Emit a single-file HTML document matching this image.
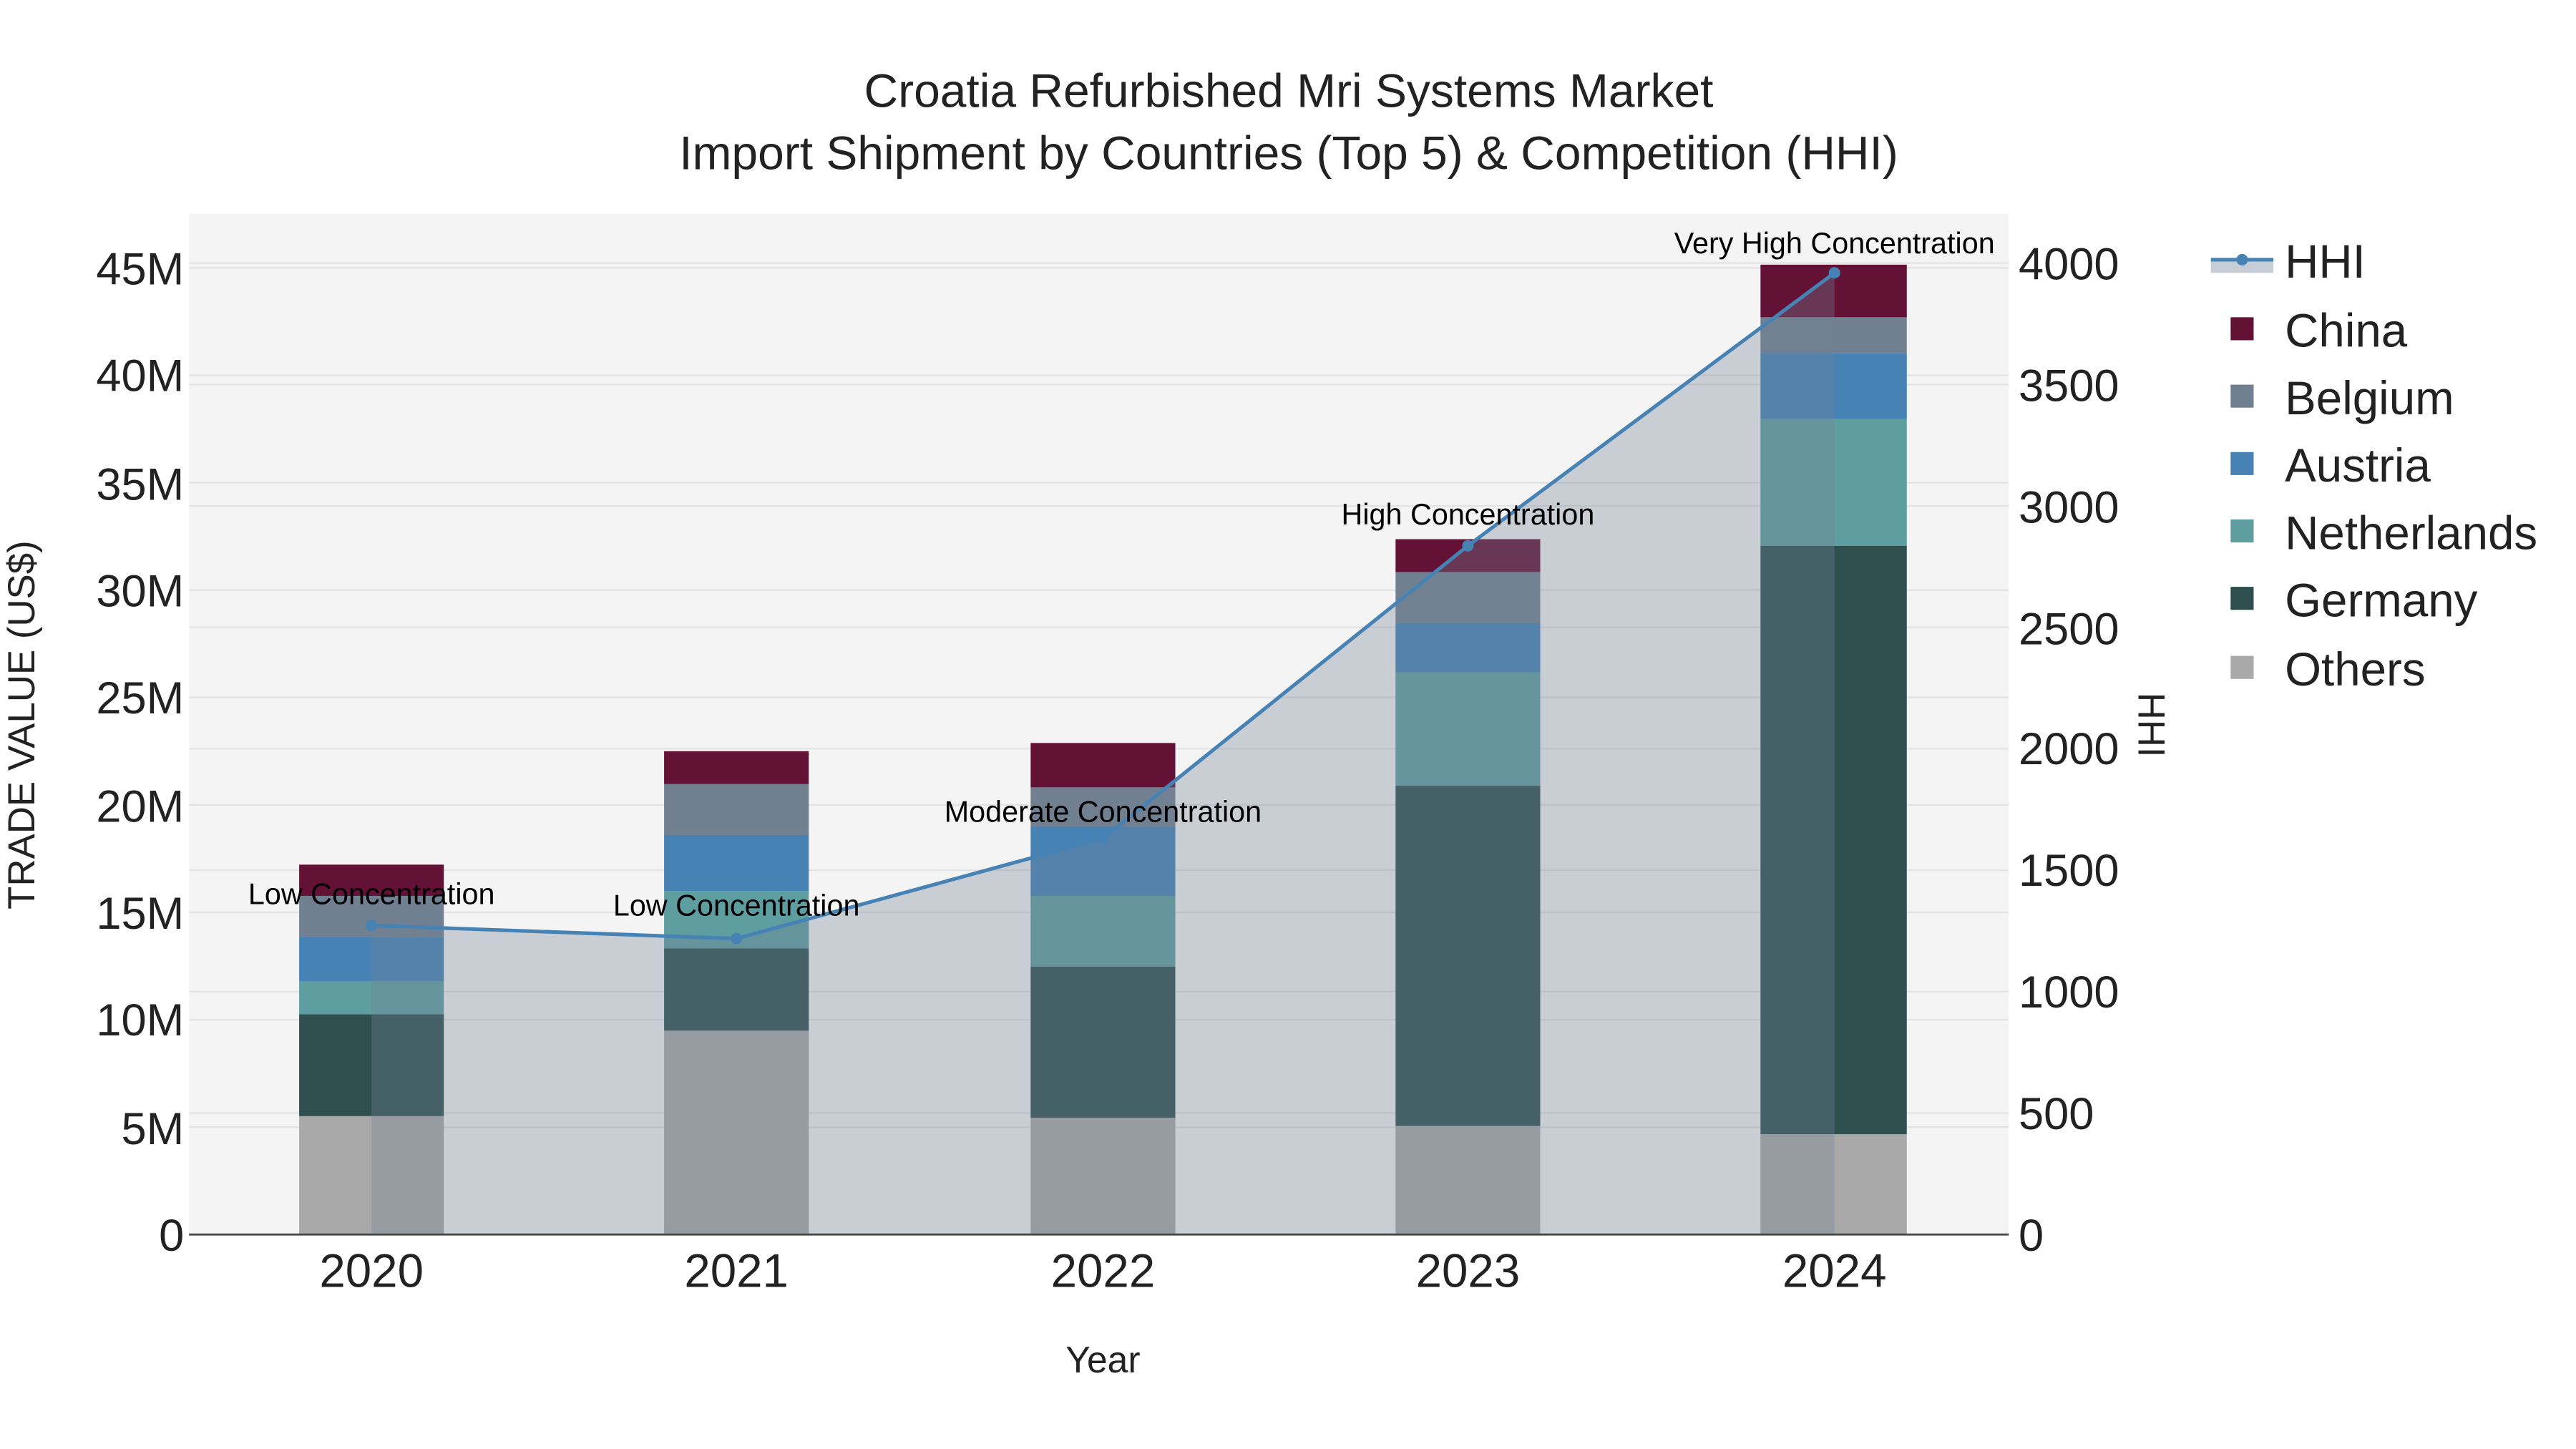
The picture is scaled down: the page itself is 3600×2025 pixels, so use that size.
<!DOCTYPE html>
<html><head><meta charset="utf-8"><style>html,body{margin:0;padding:0;background:#fff}svg{display:block}</style></head>
<body>
<svg width="3600" height="2025" viewBox="0 0 1567 881.5" preserveAspectRatio="xMinYMin meet" xmlns="http://www.w3.org/2000/svg" font-family="'Liberation Sans', sans-serif">
<rect width="1567" height="881.5" fill="#fff"/>
<rect x="115" y="130" width="1107" height="621" fill="#f4f4f4"/>
<g stroke="#e3e3e3" stroke-width="1">
<line x1="115" x2="1222" y1="685.7" y2="685.7"/><line x1="115" x2="1222" y1="620.3" y2="620.3"/>
<line x1="115" x2="1222" y1="555" y2="555"/><line x1="115" x2="1222" y1="489.7" y2="489.7"/>
<line x1="115" x2="1222" y1="424.3" y2="424.3"/><line x1="115" x2="1222" y1="359" y2="359"/>
<line x1="115" x2="1222" y1="293.7" y2="293.7"/><line x1="115" x2="1222" y1="228.3" y2="228.3"/>
<line x1="115" x2="1222" y1="163" y2="163"/>
<line x1="115" x2="1222" y1="677.1" y2="677.1"/><line x1="115" x2="1222" y1="603.3" y2="603.3"/>
<line x1="115" x2="1222" y1="529.4" y2="529.4"/><line x1="115" x2="1222" y1="455.5" y2="455.5"/>
<line x1="115" x2="1222" y1="381.6" y2="381.6"/><line x1="115" x2="1222" y1="307.8" y2="307.8"/>
<line x1="115" x2="1222" y1="233.9" y2="233.9"/><line x1="115" x2="1222" y1="160" y2="160"/>
</g>
<g>
<rect x="182" y="679" width="88" height="72" fill="#a9a9a9"/><rect x="182" y="617" width="88" height="62" fill="#2f4f4f"/><rect x="182" y="597" width="88" height="20" fill="#5f9ea0"/><rect x="182" y="570" width="88" height="27" fill="#4682b4"/><rect x="182" y="545" width="88" height="25" fill="#708090"/><rect x="182" y="526" width="88" height="19" fill="#631236"/>
<rect x="404" y="627" width="88" height="124" fill="#a9a9a9"/><rect x="404" y="577" width="88" height="50" fill="#2f4f4f"/><rect x="404" y="542" width="88" height="35" fill="#5f9ea0"/><rect x="404" y="508" width="88" height="34" fill="#4682b4"/><rect x="404" y="477" width="88" height="31" fill="#708090"/><rect x="404" y="457" width="88" height="20" fill="#631236"/>
<rect x="627" y="680" width="88" height="71" fill="#a9a9a9"/><rect x="627" y="588" width="88" height="92" fill="#2f4f4f"/><rect x="627" y="545" width="88" height="43" fill="#5f9ea0"/><rect x="627" y="503" width="88" height="42" fill="#4682b4"/><rect x="627" y="479" width="88" height="24" fill="#708090"/><rect x="627" y="452" width="88" height="27" fill="#631236"/>
<rect x="849" y="685" width="88" height="66" fill="#a9a9a9"/><rect x="849" y="478" width="88" height="207" fill="#2f4f4f"/><rect x="849" y="409" width="88" height="69" fill="#5f9ea0"/><rect x="849" y="379" width="88" height="30" fill="#4682b4"/><rect x="849" y="348" width="88" height="31" fill="#708090"/><rect x="849" y="328" width="88" height="20" fill="#631236"/>
<rect x="1071" y="690" width="89" height="61" fill="#a9a9a9"/><rect x="1071" y="332" width="89" height="358" fill="#2f4f4f"/><rect x="1071" y="255" width="89" height="77" fill="#5f9ea0"/><rect x="1071" y="215" width="89" height="40" fill="#4682b4"/><rect x="1071" y="193" width="89" height="22" fill="#708090"/><rect x="1071" y="161" width="89" height="32" fill="#631236"/>
</g>
<polygon points="226,751 226,563 448,571 671,510 893,332 1116,166 1116,751" fill="rgb(115,129,152)" fill-opacity="0.336"/>
<polyline points="226,563 448,571 671,510 893,332 1116,166" fill="none" stroke="#4682b4" stroke-width="2.2"/>
<g fill="#4682b4"><circle cx="226" cy="563" r="3.5"/><circle cx="448" cy="571" r="3.5"/><circle cx="671" cy="510" r="3.5"/><circle cx="893" cy="332" r="3.5"/><circle cx="1116" cy="166" r="3.5"/></g>
<line x1="115" x2="1222" y1="751" y2="751" stroke="#444" stroke-width="1.2"/>
<g font-size="18" fill="#000" text-anchor="middle">
<text x="226" y="550">Low Concentration</text><text x="448" y="557">Low Concentration</text>
<text x="671" y="500">Moderate Concentration</text><text x="893" y="319">High Concentration</text>
<text x="1116" y="154">Very High Concentration</text></g>
<g font-size="27.5" fill="#222" text-anchor="end">
<text x="112" y="761">0</text><text x="112" y="696">5M</text><text x="112" y="630">10M</text><text x="112" y="565">15M</text><text x="112" y="500">20M</text><text x="112" y="434">25M</text><text x="112" y="369">30M</text><text x="112" y="304">35M</text><text x="112" y="238">40M</text><text x="112" y="173">45M</text></g>
<g font-size="27.5" fill="#222" text-anchor="start">
<text x="1228" y="761">0</text><text x="1228" y="687">500</text><text x="1228" y="613">1000</text><text x="1228" y="539">1500</text><text x="1228" y="465">2000</text><text x="1228" y="392">2500</text><text x="1228" y="318">3000</text><text x="1228" y="244">3500</text><text x="1228" y="170">4000</text></g>
<g font-size="28.5" fill="#222" text-anchor="middle">
<text x="226" y="783">2020</text><text x="448" y="783">2021</text><text x="671" y="783">2022</text><text x="893" y="783">2023</text><text x="1116" y="783">2024</text></g>
<text x="671" y="835" font-size="22.5" fill="#222" text-anchor="middle">Year</text>
<text transform="translate(21,441) rotate(-90)" font-size="23" fill="#222" text-anchor="middle">TRADE VALUE (US$)</text>
<text transform="translate(1301,441) rotate(90)" font-size="23" fill="#222" text-anchor="middle">HHI</text>
<g font-size="28.7" fill="#222" text-anchor="middle"><text x="784" y="65">Croatia Refurbished Mri Systems Market</text><text x="784" y="103">Import Shipment by Countries (Top 5) &amp; Competition (HHI)</text></g>
<rect x="1345" y="158" width="38" height="8" fill="rgb(115,129,152)" fill-opacity="0.4"/>
<line x1="1345" x2="1383" y1="158" y2="158" stroke="#4682b4" stroke-width="2.2"/><circle cx="1364" cy="158" r="3.5" fill="#4682b4"/>
<rect x="1357" y="193" width="14" height="14" fill="#631236"/><rect x="1357" y="234" width="14" height="14" fill="#708090"/><rect x="1357" y="275" width="14" height="14" fill="#4682b4"/><rect x="1357" y="316" width="14" height="14" fill="#5f9ea0"/><rect x="1357" y="357" width="14" height="14" fill="#2f4f4f"/><rect x="1357" y="399" width="14" height="14" fill="#a9a9a9"/>
<g font-size="28.5" fill="#222"><text x="1390" y="169">HHI</text><text x="1390" y="211">China</text><text x="1390" y="252">Belgium</text><text x="1390" y="293">Austria</text><text x="1390" y="334">Netherlands</text><text x="1390" y="375">Germany</text><text x="1390" y="417">Others</text></g>
</svg>
</body></html>
